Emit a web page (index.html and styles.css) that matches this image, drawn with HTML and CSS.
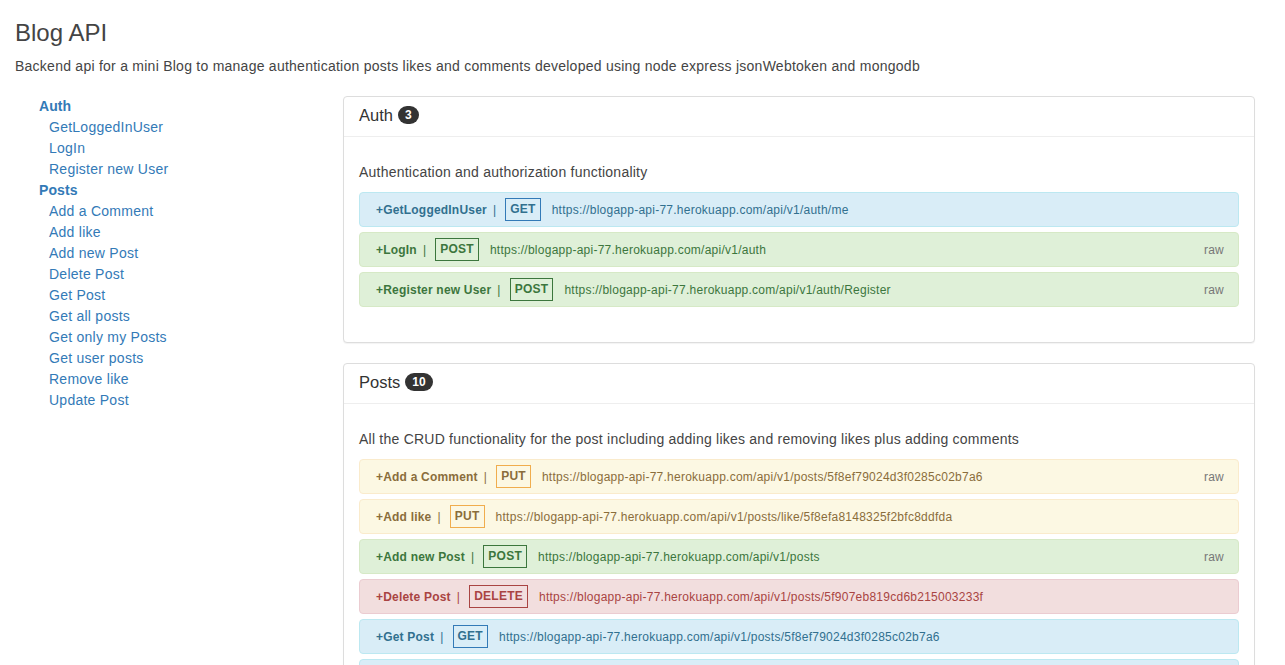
FILE: index.html
```html
<!DOCTYPE html>
<html lang="en">
<head>
<meta charset="utf-8">
<title>Blog API</title>
<link rel="stylesheet" href="styles.css">
</head>
<body>
<div class="page">
  <header class="intro">
    <h1 class="title">Blog API</h1>
    <p class="lead">Backend api for a mini Blog to manage authentication posts likes and comments developed using node express jsonWebtoken and mongodb</p>
  </header>
  <div class="layout">
    <nav class="sidebar">
      <ul class="nav">
        <li class="nav-group">Auth</li>
        <li class="nav-item">GetLoggedInUser</li>
        <li class="nav-item">LogIn</li>
        <li class="nav-item">Register new User</li>
        <li class="nav-group">Posts</li>
        <li class="nav-item">Add a Comment</li>
        <li class="nav-item">Add like</li>
        <li class="nav-item">Add new Post</li>
        <li class="nav-item">Delete Post</li>
        <li class="nav-item">Get Post</li>
        <li class="nav-item">Get all posts</li>
        <li class="nav-item">Get only my Posts</li>
        <li class="nav-item">Get user posts</li>
        <li class="nav-item">Remove like</li>
        <li class="nav-item">Update Post</li>
      </ul>
    </nav>
    <main class="main">
      <section class="panel">
        <div class="panel-heading"><span class="panel-title">Auth</span><span class="badge">3</span></div>
        <div class="panel-body">
          <p class="desc">Authentication and authorization functionality</p>
          <div class="req info"><span class="name">+GetLoggedInUser</span><span class="sep">|</span><span class="method get">GET</span><span class="url">https://blogapp-api-77.herokuapp.com/api/v1/auth/me</span></div>
          <div class="req success"><span class="name">+LogIn</span><span class="sep">|</span><span class="method post">POST</span><span class="url">https://blogapp-api-77.herokuapp.com/api/v1/auth</span><span class="raw">raw</span></div>
          <div class="req success"><span class="name">+Register new User</span><span class="sep">|</span><span class="method post">POST</span><span class="url">https://blogapp-api-77.herokuapp.com/api/v1/auth/Register</span><span class="raw">raw</span></div>
        </div>
      </section>
      <section class="panel">
        <div class="panel-heading"><span class="panel-title">Posts</span><span class="badge">10</span></div>
        <div class="panel-body">
          <p class="desc">All the CRUD functionality for the post including adding likes and removing likes plus adding comments</p>
          <div class="req warning"><span class="name">+Add a Comment</span><span class="sep">|</span><span class="method put">PUT</span><span class="url">https://blogapp-api-77.herokuapp.com/api/v1/posts/5f8ef79024d3f0285c02b7a6</span><span class="raw">raw</span></div>
          <div class="req warning"><span class="name">+Add like</span><span class="sep">|</span><span class="method put">PUT</span><span class="url">https://blogapp-api-77.herokuapp.com/api/v1/posts/like/5f8efa8148325f2bfc8ddfda</span></div>
          <div class="req success"><span class="name">+Add new Post</span><span class="sep">|</span><span class="method post">POST</span><span class="url">https://blogapp-api-77.herokuapp.com/api/v1/posts</span><span class="raw">raw</span></div>
          <div class="req danger"><span class="name">+Delete Post</span><span class="sep">|</span><span class="method delete">DELETE</span><span class="url">https://blogapp-api-77.herokuapp.com/api/v1/posts/5f907eb819cd6b215003233f</span></div>
          <div class="req info"><span class="name">+Get Post</span><span class="sep">|</span><span class="method get">GET</span><span class="url">https://blogapp-api-77.herokuapp.com/api/v1/posts/5f8ef79024d3f0285c02b7a6</span></div>
          <div class="req info"><span class="name">+Get all posts</span><span class="sep">|</span><span class="method get">GET</span><span class="url">https://blogapp-api-77.herokuapp.com/api/v1/posts</span></div>
          <div class="req info"><span class="name">+Get only my Posts</span><span class="sep">|</span><span class="method get">GET</span><span class="url">https://blogapp-api-77.herokuapp.com/api/v1/posts/me</span></div>
          <div class="req info"><span class="name">+Get user posts</span><span class="sep">|</span><span class="method get">GET</span><span class="url">https://blogapp-api-77.herokuapp.com/api/v1/posts/user/5f8ef5a148325f2bfc8ddfd9</span></div>
          <div class="req warning"><span class="name">+Remove like</span><span class="sep">|</span><span class="method put">PUT</span><span class="url">https://blogapp-api-77.herokuapp.com/api/v1/posts/unlike/5f8efa8148325f2bfc8ddfda</span></div>
          <div class="req warning"><span class="name">+Update Post</span><span class="sep">|</span><span class="method put">PUT</span><span class="url">https://blogapp-api-77.herokuapp.com/api/v1/posts/5f8ef79024d3f0285c02b7a6</span><span class="raw">raw</span></div>
        </div>
      </section>
    </main>
  </div>
</div>
</body>
</html>
```

FILE: styles.css
```css
html, body {
  margin: 0;
  padding: 0;
  background: #fff;
}
body {
  font-family: "Liberation Sans", Arial, sans-serif;
  font-size: 14px;
  line-height: 20px;
  color: #444;
}
.page {
  padding: 0 30px 0 15px;
}
.title {
  margin: 20px 0 10px;
  font-size: 24px;
  font-weight: 500;
  line-height: 26.4px;
  color: #444;
}
.lead {
  margin: 0 0 20px;
  letter-spacing: 0.25px;
}
.layout {
  display: flex;
  align-items: flex-start;
}
.sidebar {
  width: 328px;
  flex: none;
}
.nav {
  list-style: none;
  margin: 0;
  padding: 0 0 0 24px;
  line-height: 21px;
  color: #337ab7;
  letter-spacing: 0.25px;
}
.nav-group {
  font-weight: bold;
  letter-spacing: 0.1px;
}
.nav-item {
  padding-left: 10px;
}
.main {
  flex: 1;
  min-width: 0;
}
.panel {
  border: 1px solid #ddd;
  border-radius: 4px;
  box-shadow: 0 1px 1px rgba(0,0,0,.05);
  margin-bottom: 20px;
  background: #fff;
}
.panel-heading {
  height: 40px;
  box-sizing: border-box;
  border-bottom: 1px solid #eee;
  padding: 0 15px 3px;
  display: flex;
  align-items: center;
}
.panel-title {
  font-size: 16.5px;
  color: #333;
}
.badge {
  display: inline-block;
  margin-left: 5px;
  padding: 3px 7px;
  font-size: 12px;
  font-weight: bold;
  line-height: 12px;
  color: #fff;
  background: #333;
  border-radius: 10px;
}
.panel-body {
  padding: 15px 15px 30px;
}
.desc {
  margin: 10px 0 10px;
  letter-spacing: 0.23px;
}
.req {
  display: flex;
  align-items: center;
  height: 35px;
  box-sizing: border-box;
  border: 1px solid;
  border-radius: 4px;
  padding: 0 14px 0 16px;
  margin-bottom: 5px;
  font-size: 12px;
  letter-spacing: 0.25px;
  white-space: nowrap;
}
.req .name {
  font-weight: bold;
  letter-spacing: 0.2px;
}
.req .sep {
  margin: 0 6px;
}
.method {
  display: inline-block;
  border: 1px solid;
  padding: 0 4px;
  height: 23px;
  line-height: 21px;
  box-sizing: border-box;
  font-weight: bold;
  margin-left: 3px;
}
.url {
  margin-left: 11px;
}
.raw {
  margin-left: auto;
  color: #777;
}
.info { background: #d9edf7; border-color: #bce8f1; color: #31708f; }
.success { background: #dff0d8; border-color: #d6e9c6; color: #3c763d; }
.warning { background: #fcf8e3; border-color: #faebcc; color: #8a6d3b; }
.danger { background: #f2dede; border-color: #ebccd1; color: #a94442; }
.method.get { border-color: #337ab7; }
.method.post { border-color: #3c763d; }
.method.put { border-color: #f0ad4e; }
.method.delete { border-color: #a94442; }
```
